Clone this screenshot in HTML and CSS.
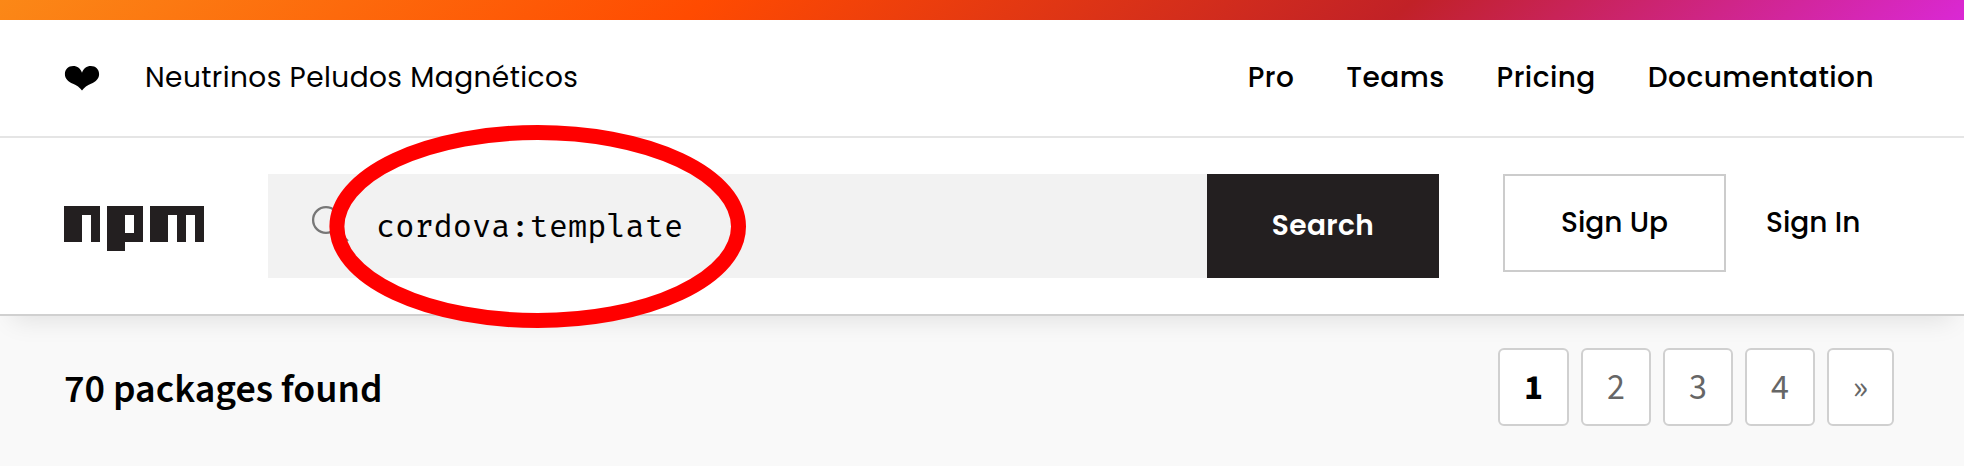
FILE: index.html
```html
<!DOCTYPE html>
<html lang="en">
<head>
<meta charset="utf-8">
<title>npm search</title>
<link rel="stylesheet" href="styles.css">
</head>
<body>
<header class="header">
  <div class="rainbow"></div>
  <div class="topbar">
    <svg class="heart" width="36" height="26" viewBox="0 0 36 26"><path d="M18 25.500C16 22.500 12.500 20.500 9 18.800C4 16.300 .9 13.500 .9 8.900C.9 4.200 4.300 .9 9.200 .9C13.300 .9 16.700 3.200 18 7.800C19.300 3.200 22.700 .9 26.800 .9C31.700 .9 35.100 4.200 35.100 8.900C35.100 13.500 32 16.300 27 18.800C23.500 20.500 20 22.500 18 25.500Z"/></svg>
    <span class="expansion">Neutrinos Peludos Magnéticos</span>
    <nav class="nav">
      <a class="nav-pro">Pro</a>
      <a class="nav-teams">Teams</a>
      <a class="nav-pricing">Pricing</a>
      <a class="nav-docs">Documentation</a>
    </nav>
  </div>
  <div class="searchbar">
    <svg class="logo" width="140" height="45" viewBox="0 0 140 45"><path fill-rule="evenodd" d="M0 0H36V36H27V9H18V36H0ZM43 0H79V36H61V45H43ZM61 9V27H70V9ZM86 0H140V36H131V9H122V36H113V9H104V36H86Z"/></svg>
    <form class="search">
      <div class="field">
        <svg class="glass" width="40" height="40" viewBox="0 0 40 40"><circle cx="15" cy="15" r="12.900"/><path d="M24.500 24.500L37 36"/></svg>
        <span class="query">cordova:template</span>
      </div>
      <div class="submit">Search</div>
    </form>
    <a class="signup">Sign Up</a>
    <a class="signin">Sign In</a>
    <svg class="ellipse" width="418" height="204" viewBox="0 0 418 204"><ellipse cx="208.700" cy="101.500" rx="200.800" ry="94"/></svg>
  </div>
</header>
<main class="results">
  <h1 class="count">70 packages found</h1>
  <div class="pages">
    <a class="page current">1</a>
    <a class="page">2</a>
    <a class="page">3</a>
    <a class="page">4</a>
    <a class="page next">»</a>
  </div>
</main>
</body>
</html>
```
FILE: styles.css
```css
* { box-sizing: border-box; }
body {
  margin: 0;
  height: 466px;
  overflow: hidden;
  background: #f9f9f9;
  color: #000;
  font-family: Poppins, Inter, sans-serif;
  font-size: 28px;
}
.header {
  position: relative;
  height: 316px;
  background: #fff;
  border-bottom: 2px solid #d0d0d0;
  box-shadow: 0 16px 24px -12px rgba(0, 0, 0, .1);
}
.rainbow {
  height: 20px;
  background: linear-gradient(139deg, #fb8817, #ff4b01 35.6%, #c12127 71.2%, #e02aff 107%);
}
.topbar {
  display: flex;
  align-items: center;
  height: 118px;
  padding: 0 90px 0 64px;
  border-bottom: 2px solid #e5e5e5;
}
.heart { flex: none; margin-top: -1px; }
.expansion { margin-left: 45px; letter-spacing: .42px; white-space: nowrap; }
.nav { display: flex; gap: 52px; margin-left: auto; font-weight: 500; letter-spacing: .44px; }
.searchbar {
  position: relative;
  display: flex;
  align-items: flex-start;
  padding: 36px 64px 0;
}
.logo { flex: none; margin-top: 32px; fill: #231f20; }
.search { display: flex; width: 1171px; height: 104px; margin-left: 64px; }
.field { display: flex; width: 939px; padding: 0 0 0 43px; background: #f2f2f2; }
.glass { flex: none; margin-top: 31px; fill: none; stroke: #777; stroke-width: 2.3; }
.query {
  margin-left: 25px;
  font-family: "Fira Mono", "DejaVu Sans Mono", monospace;
  font-size: 32px;
  line-height: 104px;
}
.submit {
  width: 232px;
  background: #231f20;
  color: #fff;
  font-weight: 600;
  line-height: 104px;
  text-align: center;
  letter-spacing: .4px;
}
.signup {
  width: 223px;
  height: 98px;
  margin-left: 64px;
  border: 2px solid #ccc;
  font-weight: 500;
  line-height: 94px;
  text-align: center;
}
.signin { margin-left: 40px; font-weight: 500; line-height: 98px; }
.ellipse { position: absolute; left: 329px; top: -13px; fill: none; stroke: #f00; stroke-width: 15; }
.results {
  position: relative;
  display: flex;
  justify-content: space-between;
  padding: 32px 70px 0 64px;
  font-family: "Source Sans Pro", "Source Sans 3", "Noto Sans CJK SC", sans-serif;
}
.count { margin: 0; font-size: 40px; font-weight: 600; line-height: 84px; }
.pages { display: flex; gap: 12px; }
.page {
  width: 70px;
  height: 78px;
  border: 2px solid #d0d0d0;
  border-radius: 6px;
  background: #fff;
  color: #666;
  font-size: 36px;
  line-height: 76px;
  text-align: center;
}
.current { width: 71px; color: #000; font-weight: 700; }
.next { width: 67px; }
```
